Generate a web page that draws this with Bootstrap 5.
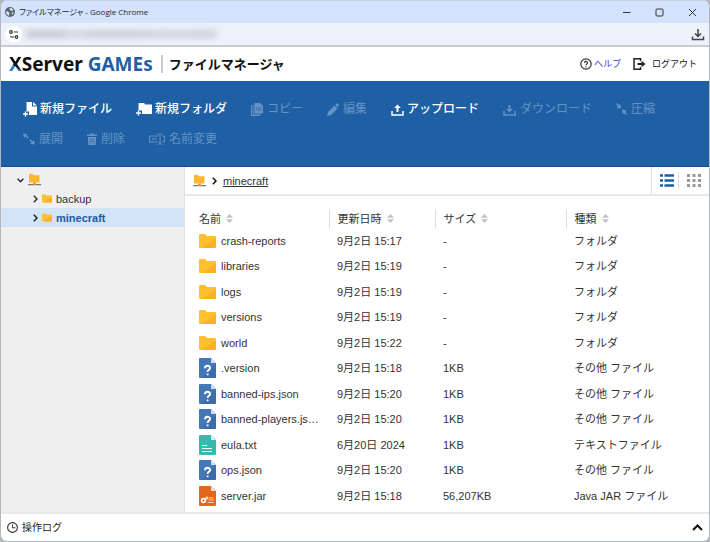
<!DOCTYPE html>
<html lang="ja">
<head>
<meta charset="utf-8">
<meta name="viewport" content="width=device-width, initial-scale=1">
<title>ファイルマネージャ</title>
<link href="https://cdn.jsdelivr.net/npm/bootstrap@5.3.0/dist/css/bootstrap.min.css" rel="stylesheet">
<style>
:root{--brand:#1f60a5;--ink:#333}
body{font-family:"Liberation Sans","Noto Sans CJK JP",sans-serif;font-size:11px;line-height:16px;color:var(--ink);background:#b4b8be}
svg{display:block;flex:none}
button{font:inherit;color:inherit;border:0;background:none;padding:0}
.win{border:1px solid #b3b7be;border-top-color:#c9d2e0;border-radius:7px;overflow:hidden;background:#fff}
.titlebar{background:#d3e3fd;height:22px;font-family:"Open Sans","Noto Sans CJK JP",sans-serif;font-size:8px;font-feature-settings:"palt";color:#22262c}
.address{background:#edf1fa;height:24px;border-bottom:2px solid #c9ccd2}
.site-info{width:17px;height:17px;background:#fff;border-radius:50%}
.url-blur{width:190px;height:8px;background:linear-gradient(90deg,#c5c9d1 0 18%,#d3d7df 24%,#c9cdd5 40% 52%,#d0d4dc 70%,#cdd1d9);filter:blur(3px)}
.brandbar{height:34px}
.logo{font-family:"Noto Sans",sans-serif;font-weight:700;font-size:19px;line-height:24px;color:#111}
.logo .x-mark{background:linear-gradient(35deg,#2a7ac8 42%,#111 43%);-webkit-background-clip:text;background-clip:text;color:transparent}
.logo .games{color:var(--brand)}
.app-name{font-family:"Noto Sans CJK JP",sans-serif;font-weight:700;font-size:13px;color:#111;border-left:2px solid #ccc;line-height:18px;padding-left:6px}
.help{font-size:9px;color:#333}
.help a{color:#3b46d8;text-decoration:none;margin:0 12px 0 2px}
.help button{color:#111;gap:6px}
.toolbar{background:var(--brand);min-height:86px;border-bottom:1px solid #0f4f98;gap:6px 24px;padding:16px 12px 0 22px;font-size:12px;line-height:24px;color:#fff}
.toolbar button{height:24px;font-weight:500;gap:3px}
.toolbar button:disabled{color:#6493c4;font-weight:400;gap:4px}
.sidebar{width:184px;background:#efefef;border-right:1px solid #e2e2e2}
.tree{padding-top:4px}
.tree button{width:100%;height:19px;text-align:left}
.tree button:first-child{height:18px}
.tree .level{padding-left:32px}
.tree .chosen{background:#d3e4f7;color:#1b5ba3;font-weight:700}
.tree .chosen .chevron{color:#222}
.crumbs{height:29px;border-bottom:2px solid #e8e8e8}
.crumbs .chevron{margin:0 6px;color:#111}
.crumbs a{color:#333}
.views{border-left:1px solid #ddd}
.views .divider{width:1px;height:17px;background:#ddd}
.files{table-layout:fixed;width:100%;margin-top:13px}
.files th{height:19px;padding:0 0 0 8px;font-weight:400;border-left:1px solid #ddd}
.files th span{gap:5px}
.files td{height:25px;padding:0 0 0 8px;white-space:nowrap}
.files tbody tr:nth-child(even) td{height:26px}
.files th:first-child,.files td:first-child{padding-left:14px;border-left:0}
.files td span{gap:5px}
.c-name{width:144px}.c-date{width:106px}.c-size{width:131px}
.logbar{height:29px;padding:0 6px;border-top:2px solid #e8e8e8;font-size:10px;color:#222}
</style>
</head>
<body>
<svg width="0" height="0" class="position-absolute" aria-hidden="true">
<defs>
<symbol id="folder" viewBox="0 0 17 14"><path d="M0 1Q0 0 1 0h5l2 2h8q1 0 1 1v10q0 1-1 1H1q-1 0-1-1z" fill="#fec12e"/><path d="M17 4v9q0 1-1 1H3z" fill="#fbb028"/></symbol>
<symbol id="drive" viewBox="0 0 13 12"><path d="M1 0h4l1.200 1.200H11.500V8.500H1z" fill="#fdb92b"/><path d="M0 10.700h13" stroke="#777" stroke-width="1.300"/><path d="M5 8.500h3v2.200H5z" fill="#e3a32a"/></symbol>
<symbol id="unknown" viewBox="0 0 17 20"><path d="M0 1Q0 0 1 0h11l5 5v14q0 1-1 1H1q-1 0-1-1z" fill="#4377b5"/><path d="M17 6v13q0 1-1 1H2z" fill="#3c6cab"/><path d="M12 0l5 5h-5z" fill="#cfe0f2"/><path d="M6 10.200c0-3.300 5-3.200 5-.3 0 2-2.400 1.900-2.400 4.100M8.600 15.400v1.900" fill="none" stroke="#fff" stroke-width="1.900"/></symbol>
<symbol id="textfile" viewBox="0 0 17 20"><path d="M0 1Q0 0 1 0h11l5 5v14q0 1-1 1H1q-1 0-1-1z" fill="#37b9ad"/><path d="M12 0l5 5h-5z" fill="#d4f1ee"/><path d="M3 10.500h5M3 13.500h10M3 16.500h10" stroke="#fff" stroke-width="1.100"/></symbol>
<symbol id="jarfile" viewBox="0 0 17 20"><path d="M0 1Q0 0 1 0h11l5 5v14q0 1-1 1H1q-1 0-1-1z" fill="#e4671f"/><path d="M12 0l5 5h-5z" fill="#fbdcc8"/><circle cx="4.500" cy="14.500" r="1.900" fill="none" stroke="#fff" stroke-width="1.600"/><circle cx="7.800" cy="12" r="1" fill="none" stroke="#fff"/><path d="M9.500 12h5M9.500 14h5M8.500 16.500h6.500" stroke="#f9c9a8" stroke-width="1.100"/></symbol>
<symbol id="sort" viewBox="0 0 7 9"><path d="M0 3.700L3.500 0 7 3.700zM0 5.300h7L3.500 9z" fill="#bfc3c7"/></symbol>
<symbol id="chev" viewBox="0 0 5 8"><path d="M.8.8L4 4 .8 7.200" fill="none" stroke="currentColor" stroke-width="1.500"/></symbol>
</defs>
</svg>
<div class="win min-vh-100 d-flex flex-column">
  <div class="titlebar d-flex align-items-center ps-1 pe-2">
    <svg width="10" height="10" viewBox="0 0 10 10"><circle cx="5" cy="5" r="5" fill="#5b6067"/><path d="M1 4l2 .5L4.500 6 4 8.800C2 8.500 1 6.500 1 4zM4 1.500L6.500 1l2 1.800L7 4 5.500 3.500zM6.500 5.500l2.300-.3L7.500 8z" fill="#d3e3fd"/></svg>
    <span class="ms-1 flex-grow-1">ファイルマネージャ - Google Chrome</span>
    <div class="d-flex align-items-center gap-4 pe-1">
      <button aria-label="最小化"><svg width="9" height="9" viewBox="0 0 9 9"><path d="M1 4.500h7.500" stroke="#333"/></svg></button>
      <button aria-label="最大化"><svg width="9" height="9" viewBox="0 0 9 9"><rect x="1" y="1" width="7" height="7" rx="1" fill="none" stroke="#333"/></svg></button>
      <button aria-label="閉じる"><svg width="9" height="9" viewBox="0 0 9 9"><path d="M1 1l7 7M8 1L1 8" stroke="#333"/></svg></button>
    </div>
  </div>
  <div class="address d-flex align-items-center ps-1">
    <button class="site-info d-flex align-items-center justify-content-center" aria-label="サイト情報"><svg width="10" height="9" viewBox="0 0 10 9"><g fill="none" stroke="#333" stroke-width="1.200"><circle cx="2" cy="2" r="1.300"/><path d="M5 2h4M1 7h4"/><circle cx="7.500" cy="7" r="1.300"/></g></svg></button>
    <div class="url-blur ms-1"></div>
    <button class="ms-auto me-1" aria-label="ダウンロード履歴"><svg width="14" height="13" viewBox="0 0 14 13"><path d="M7 1v7M4 5.500l3 3 3-3M1.500 8.500v3h11v-3" fill="none" stroke="#444" stroke-width="1.500"/></svg></button>
  </div>
  <header class="brandbar d-flex align-items-center ps-2 pe-2">
    <div class="logo"><span class="x-mark">X</span>Server <span class="games">GAMEs</span></div>
    <div class="app-name ms-2">ファイルマネージャ</div>
    <div class="help ms-auto d-flex align-items-center me-1">
      <svg width="12" height="12" viewBox="0 0 12 12"><circle cx="6" cy="6" r="5.200" fill="none" stroke="#333" stroke-width="1.200"/><path d="M4.500 4.900c0-2 3-2 3 0C7.500 6 6 6 6 7.300M6 8.200v1.200" fill="none" stroke="#333" stroke-width="1.100"/></svg>
      <a href="#">ヘルプ</a>
      <button class="d-flex align-items-center"><svg width="13" height="12" viewBox="0 0 13 12"><path d="M7.500 3V.8H1v10.400h6.500V9" fill="none" stroke="#222" stroke-width="1.500"/><path d="M4.500 5h4V2.800L12.500 6 8.500 9.200V7h-4z" fill="#222"/></svg>ログアウト</button>
    </div>
  </header>
  <div class="toolbar d-flex flex-wrap align-content-start">
    <button class="d-flex align-items-center"><svg width="14" height="15" viewBox="0 0 14 15"><path d="M3.500 0H9v4.500h5V13H6V9.500H3.500z" fill="#fff"/><path d="M10 0l4 3.600h-4z" fill="#fff"/><path d="M0 12h5M2.500 9.500v5" stroke="#fff" stroke-width="1.400"/></svg>新規ファイル</button>
    <button class="d-flex align-items-center"><svg width="16" height="14" viewBox="0 0 16 14"><path d="M2.500 1H8l1.300 1.500H16V12H6V8.500H2.500z" fill="#fff"/><path d="M0 11h5M2.500 8.500v5" stroke="#fff" stroke-width="1.400"/></svg>新規フォルダ</button>
    <button disabled class="d-flex align-items-center"><svg width="12" height="13" viewBox="0 0 12 13"><path d="M3.500 0H9l3 3v7.500H3.500z" fill="currentColor"/><path d="M.6 2v10.400H9" fill="none" stroke="currentColor" stroke-width="1.200"/><path d="M2.300 2v8.900H10" fill="none" stroke="currentColor" stroke-width=".8"/><path d="M5 5h5.500M5 7h5.500" stroke="#1f60a5" stroke-width=".7"/></svg>コピー</button>
    <button disabled class="d-flex align-items-center"><svg width="12" height="13" viewBox="0 0 12 13"><path d="M0 13l1-4L7.500 2.500l3 3L4 12zM8.300 1.700L9.500.5q.5-.5 1 0l1.200 1.300q.5.500 0 1l-1.200 1.700z" fill="currentColor"/></svg>編集</button>
    <button class="d-flex align-items-center"><svg width="13" height="13" viewBox="0 0 13 13"><path d="M1 8v4h11V8" fill="none" stroke="#fff" stroke-width="1.500"/><path d="M6.500 1.500L9.800 5H7.500v4h-2V5H3.200z" fill="#fff"/></svg>アップロード</button>
    <button disabled class="d-flex align-items-center"><svg width="13" height="13" viewBox="0 0 13 13"><path d="M1 8v4h11V8" fill="none" stroke="currentColor" stroke-width="1.500"/><path d="M6.500 9.500L3.200 6h2.300V2h2v4h2.300z" fill="currentColor"/></svg>ダウンロード</button>
    <button disabled class="d-flex align-items-center"><svg width="11" height="12" viewBox="0 0 11 12"><path d="M0 1l1-1 2 2 1.300-1.300.7 4.800-4.500-.8L1.800 3zM11 11l-1 1-2-2-1.300 1.300L6 6.500l4.500.8L9.200 9z" fill="currentColor"/></svg>圧縮</button>
    <button disabled class="d-flex align-items-center"><svg width="12" height="12" viewBox="0 0 12 12"><path d="M0 .5l4.800.7L3.500 2.500 5.800 4.800l-1 1L2.500 3.500 1 5zM12 11.500l-4.800-.7L8.500 9.500 6.200 7.200l1-1L9.500 8.500 11 7z" fill="currentColor"/></svg>展開</button>
    <button disabled class="d-flex align-items-center"><svg width="10" height="12" viewBox="0 0 10 12"><path d="M0 1.500h3.500V.5h3v1H10V3H0zM.8 4h8.400l-.5 8H1.300z" fill="currentColor"/><path d="M3.300 5.500v5M5 5.500v5M6.700 5.500v5" stroke="#1f60a5" stroke-width=".5"/></svg>削除</button>
    <button disabled class="d-flex align-items-center"><svg width="16" height="12" viewBox="0 0 16 12"><path d="M9 3H.5v6H9M13 3h2.500v6H13M2.500 6H8M8.500.5q2.500 0 2.500 2v7q0 2-2.500 2M13.500.5Q11 .5 11 2.500M11 9.500q0 2 2.500 2" fill="none" stroke="currentColor"/></svg>名前変更</button>
  </div>
  <div class="d-flex flex-grow-1">
    <nav class="sidebar flex-shrink-0">
      <div class="tree">
        <button class="d-flex align-items-center ps-3" aria-label="ルート"><svg width="7" height="5" viewBox="0 0 7 5"><path d="M.6.8l2.900 3 2.900-3" fill="none" stroke="#222" stroke-width="1.300"/></svg><svg class="ms-1" width="13" height="12"><use href="#drive"/></svg></button>
        <button class="level d-flex align-items-center"><svg class="chevron" width="5" height="8"><use href="#chev"/></svg><svg class="ms-1 me-1" width="10" height="9"><use href="#folder"/></svg>backup</button>
        <button class="level chosen d-flex align-items-center"><svg class="chevron" width="5" height="8"><use href="#chev"/></svg><svg class="ms-1 me-1" width="10" height="9"><use href="#folder"/></svg>minecraft</button>
      </div>
    </nav>
    <main class="flex-grow-1">
      <div class="crumbs d-flex align-items-center ps-2">
        <svg width="13" height="12"><use href="#drive"/></svg>
        <svg class="chevron" width="5" height="8"><use href="#chev"/></svg>
        <a href="#">minecraft</a>
        <div class="views ms-auto d-flex align-items-center h-100 px-2">
          <button aria-label="リスト表示"><svg width="14" height="13" viewBox="0 0 14 13"><path d="M0 1.500h3M4.500 1.500H14M0 6.500h3M4.500 6.500H14M0 11.500h3M4.500 11.500H14" stroke="#1c5da6" stroke-width="2.500"/></svg></button>
          <span class="divider mx-1"></span>
          <button class="ms-1" aria-label="グリッド表示"><svg width="14" height="13" viewBox="0 0 14 13"><path d="M0 1.500h14M0 6.500h14M0 11.500h14" stroke="#999" stroke-width="3" stroke-dasharray="3 2.500"/></svg></button>
        </div>
      </div>
      <table class="files">
        <colgroup><col class="c-name"><col class="c-date"><col class="c-size"><col></colgroup>
        <thead><tr>
          <th scope="col"><span class="d-flex align-items-center">名前<svg width="7" height="9"><use href="#sort"/></svg></span></th>
          <th scope="col"><span class="d-flex align-items-center">更新日時<svg width="7" height="9"><use href="#sort"/></svg></span></th>
          <th scope="col"><span class="d-flex align-items-center">サイズ<svg width="7" height="9"><use href="#sort"/></svg></span></th>
          <th scope="col"><span class="d-flex align-items-center">種類<svg width="7" height="9"><use href="#sort"/></svg></span></th>
        </tr></thead>
        <tbody id="rows"></tbody>
      </table>
    </main>
  </div>
  <footer class="logbar d-flex align-items-center justify-content-between">
    <span class="d-flex align-items-center"><svg class="me-1" width="11" height="11" viewBox="0 0 11 11"><circle cx="5.500" cy="5.500" r="4.900" fill="none" stroke="#333" stroke-width="1.100"/><path d="M5.500 2.500v3.300h3" fill="none" stroke="#333"/></svg>操作ログ</span>
    <button aria-label="操作ログを開く"><svg width="11" height="7" viewBox="0 0 11 7"><path d="M1 6l4.500-4.500L10 6" fill="none" stroke="#111" stroke-width="2"/></svg></button>
  </footer>
</div>
<script src="https://cdn.jsdelivr.net/npm/bootstrap@5.3.0/dist/js/bootstrap.bundle.min.js"></script>
<script>
const files = [
  ["folder","crash-reports","9月2日 15:17","-","フォルダ"],
  ["folder","libraries","9月2日 15:19","-","フォルダ"],
  ["folder","logs","9月2日 15:19","-","フォルダ"],
  ["folder","versions","9月2日 15:19","-","フォルダ"],
  ["folder","world","9月2日 15:22","-","フォルダ"],
  ["unknown",".version","9月2日 15:18","1KB","その他 ファイル"],
  ["unknown","banned-ips.json","9月2日 15:20","1KB","その他 ファイル"],
  ["unknown","banned-players.js…","9月2日 15:20","1KB","その他 ファイル"],
  ["textfile","eula.txt","6月20日 2024","1KB","テキストファイル"],
  ["unknown","ops.json","9月2日 15:20","1KB","その他 ファイル"],
  ["jarfile","server.jar","9月2日 15:18","56,207KB","Java JAR ファイル"]
];
document.getElementById("rows").innerHTML = files.map(([icon,name,date,size,kind]) =>
  `<tr><td><span class="d-flex align-items-center"><svg width="17" height="${icon === "folder" ? 14 : 20}"><use href="#${icon}"/></svg>${name}</span></td><td>${date}</td><td>${size}</td><td>${kind}</td></tr>`).join("");
</script>
</body>
</html>
